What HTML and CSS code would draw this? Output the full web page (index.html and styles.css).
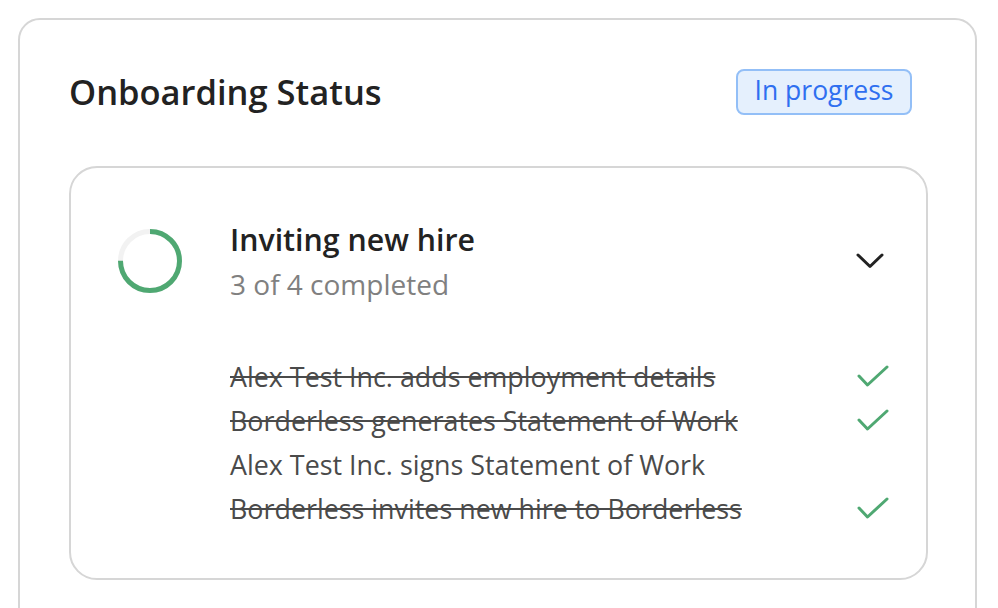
FILE: index.html
```html
<!DOCTYPE html>
<html lang="en">
<head>
<meta charset="utf-8">
<title>Onboarding Status</title>
<link rel="stylesheet" href="styles.css">
</head>
<body>
<section class="card">
  <header class="card-header">
    <h1 class="card-title">Onboarding Status</h1>
    <span class="badge">In progress</span>
  </header>
  <div class="step">
    <div class="step-head">
      <svg class="ring" width="64" height="64" viewBox="0 0 64 64">
        <circle cx="32" cy="32" r="29.5" fill="none" stroke="#f2f2f2" stroke-width="5"/>
        <circle cx="32" cy="32" r="29.5" fill="none" stroke="#4fa872" stroke-width="5" stroke-dasharray="139 186" transform="rotate(-90 32 32)"/>
      </svg>
      <div class="step-text">
        <div class="step-title">Inviting new hire</div>
        <div class="step-sub">3 of 4 completed</div>
      </div>
      <svg class="chevron" width="28" height="16" viewBox="0 0 28 16">
        <path d="M2 2 L14 13.5 L26 2" fill="none" stroke="#222" stroke-width="3" stroke-linecap="round" stroke-linejoin="round"/>
      </svg>
    </div>
    <ul class="tasks">
      <li class="task done"><span class="task-label">Alex Test Inc. adds employment details</span>
        <svg class="check" width="32" height="22" viewBox="0 0 32 22"><path d="M2 11 L10.5 20 L30 2" fill="none" stroke="#4fa872" stroke-width="3" stroke-linecap="round" stroke-linejoin="round"/></svg></li>
      <li class="task done"><span class="task-label">Borderless generates Statement of Work</span>
        <svg class="check" width="32" height="22" viewBox="0 0 32 22"><path d="M2 11 L10.5 20 L30 2" fill="none" stroke="#4fa872" stroke-width="3" stroke-linecap="round" stroke-linejoin="round"/></svg></li>
      <li class="task"><span class="task-label">Alex Test Inc. signs Statement of Work</span></li>
      <li class="task done"><span class="task-label">Borderless invites new hire to Borderless</span>
        <svg class="check" width="32" height="22" viewBox="0 0 32 22"><path d="M2 11 L10.5 20 L30 2" fill="none" stroke="#4fa872" stroke-width="3" stroke-linecap="round" stroke-linejoin="round"/></svg></li>
    </ul>
  </div>
</section>
</body>
</html>
```
FILE: styles.css
```css
* { box-sizing: border-box; }
html, body { margin: 0; padding: 0; background: #fff; }
body {
  font-family: "Open Sans", "Noto Sans", sans-serif;
  color: #222;
  height: 608px;
  overflow: hidden;
}
.card {
  margin: 18px 21px 0 18px;
  border: 2px solid #d6d6d6;
  border-radius: 22px;
  padding: 49px 47px 60px 48px;
  min-height: 700px;
}
.card-header {
  display: flex;
  align-items: center;
  justify-content: space-between;
  padding-right: 16px;
  padding-left: 1px;
  height: 46px;
}
.card-title {
  margin: 0;
  font-size: 34.5px;
  line-height: 46px;
  font-weight: 600;
  color: #222;
  white-space: nowrap;
}
.badge {
  display: inline-flex;
  align-items: center;
  justify-content: center;
  width: 176px;
  height: 46px;
  padding-bottom: 4px;
  border: 2px solid #93bff7;
  background: #e5f0fd;
  border-radius: 8px;
  color: #2f6ff0;
  font-size: 26.5px;
  white-space: nowrap;
}
.step {
  margin-top: 51px;
  margin-left: 1px;
  border: 2px solid #d6d6d6;
  border-radius: 28px;
  padding: 52px 37px 48px 47px;
}
.step-head {
  display: flex;
  align-items: center;
}
.ring { flex: none; margin-right: 48px; }
.step-text { flex: 1; padding-bottom: 2px; }
.step-title {
  font-size: 30.3px;
  line-height: 40px;
  font-weight: 600;
  color: #222;
  white-space: nowrap;
}
.step-sub {
  margin-top: 8px;
  font-size: 28px;
  line-height: 32px;
  color: #808080;
  white-space: nowrap;
}
.chevron { flex: none; margin-right: 5px; }
.tasks {
  list-style: none;
  margin: 52px 0 0 0;
  padding: 0 0 0 112px;
}
.task {
  display: flex;
  align-items: center;
  justify-content: space-between;
  height: 44px;
  font-size: 26.85px;
  color: #4a4a4a;
  white-space: nowrap;
}
.task.done .task-label { text-decoration: line-through; }
.check { flex: none; }
```
